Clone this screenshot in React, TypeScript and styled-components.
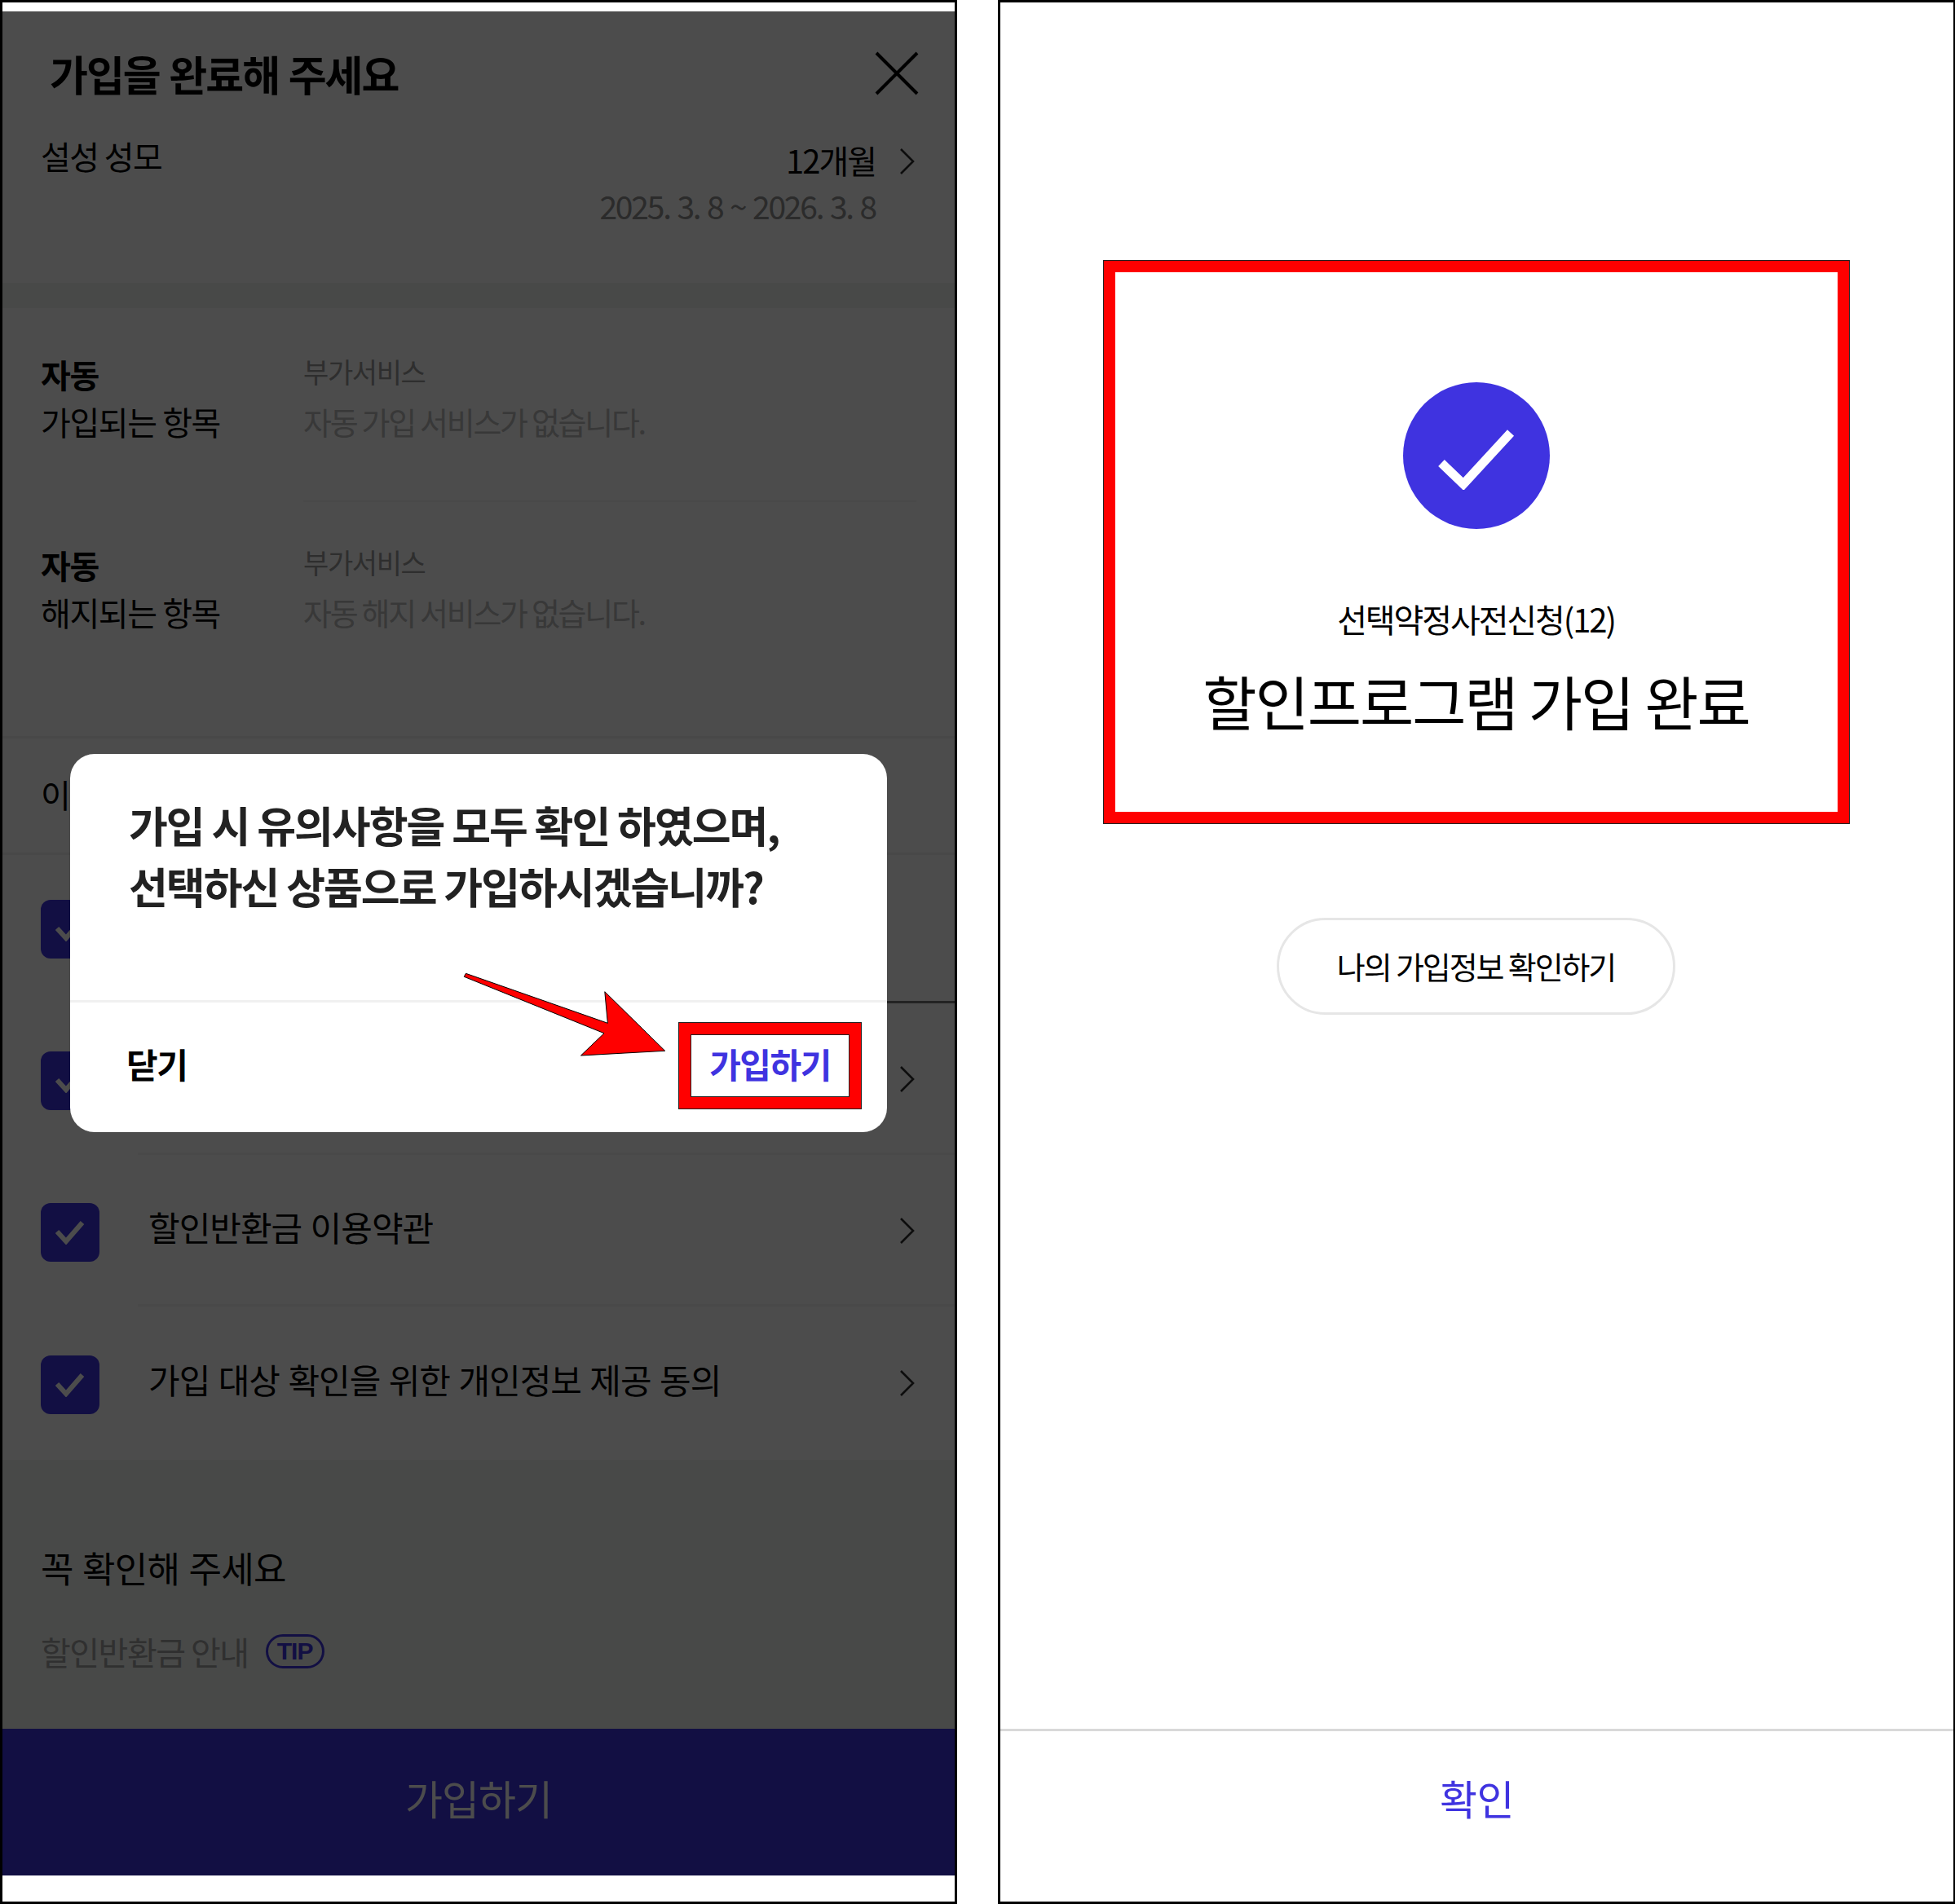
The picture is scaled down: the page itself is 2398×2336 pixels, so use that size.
import React from "react";
import styled, { createGlobalStyle } from "styled-components";

const BLUE = "#3f33e0";
// the first two rows sit behind the dialog, only their box and chevron show
const TERMS = ["", "", "할인반환금 이용약관", "가입 대상 확인을 위한 개인정보 제공 동의"];

const GlobalStyle = createGlobalStyle`
  html, body {
    margin: 0;
    background: #fff;
  }
  * {
    box-sizing: border-box;
  }
`;

function Chevron() {
  return (
    <ChevronIcon viewBox="0 0 22 34" fill="none" stroke="#2e2e2e" strokeWidth="2.6">
      <path d="M3 2l15 15L3 32" />
    </ChevronIcon>
  );
}

export default function App() {
  return (
    <Page>
      <GlobalStyle />
      <Phone>
        <Screen>
          <TitleBar>
            <Title>가입을 완료해 주세요</Title>
            <CloseIcon viewBox="0 0 54 54" fill="none" stroke="#000" strokeWidth="4">
              <path d="M2 2l50 50M52 2L2 52" />
            </CloseIcon>
          </TitleBar>
          <PeriodBlock>
            <PeriodLabel>설성 성모</PeriodLabel>
            <PeriodRight>
              <PeriodValue>
                <span>12개월</span>
                <Chevron />
              </PeriodValue>
              <PeriodDate>2025. 3. 8 ~ 2026. 3. 8</PeriodDate>
            </PeriodRight>
          </PeriodBlock>
          <Band />
          <AutoSection>
            <AutoRow>
              <AutoLabel>
                <strong>자동</strong>
                가입되는 항목
              </AutoLabel>
              <AutoBody>
                <AutoKind>부가서비스</AutoKind>
                <AutoEmpty>자동 가입 서비스가 없습니다.</AutoEmpty>
              </AutoBody>
            </AutoRow>
            <AutoDivider />
            <AutoRow $second>
              <AutoLabel>
                <strong>자동</strong>
                해지되는 항목
              </AutoLabel>
              <AutoBody>
                <AutoKind>부가서비스</AutoKind>
                <AutoEmpty>자동 해지 서비스가 없습니다.</AutoEmpty>
              </AutoBody>
            </AutoRow>
          </AutoSection>
          <TermsHeader>이용</TermsHeader>
          {TERMS.map((term, index) => (
            <TermRow key={index} $first={index === 0} $last={index === TERMS.length - 1}>
              <CheckBox $first={index === 0}>
                <svg width="36" height="30" viewBox="0 0 36 30" fill="none" stroke="#fff" strokeWidth="6">
                  <path d="M2 14l11 12L33 3" />
                </svg>
              </CheckBox>
              <TermText>{term}</TermText>
              {index > 0 && <Chevron />}
            </TermRow>
          ))}
          <Notice>
            <NoticeTitle>꼭 확인해 주세요</NoticeTitle>
            <NoticeLine>
              할인반환금 안내
              <TipBadge>TIP</TipBadge>
            </NoticeLine>
          </Notice>
          <SubmitBar>가입하기</SubmitBar>
          <Dim />
          <Modal>
            <ModalMessage>
              가입 시 유의사항을 모두 확인 하였으며,
              <br />
              선택하신 상품으로 가입하시겠습니까?
            </ModalMessage>
            <ModalActions>
              <CloseAction>닫기</CloseAction>
              <JoinAction>가입하기</JoinAction>
            </ModalActions>
            <ArrowMark viewBox="0 0 250 105" fill="#f00" stroke="#000" strokeWidth="1">
              <path d="M2.4.3L.3 4.3 172 73.7 143.5 101 246.7 95.3 172.8 22.7 176.4 61.3z" />
            </ArrowMark>
          </Modal>
        </Screen>
      </Phone>
      <ResultPhone>
        <ResultMain>
          <ResultHighlight>
            <CheckCircle>
              <svg width="100" height="84" viewBox="0 0 100 84" fill="none" stroke="#fff" strokeWidth="11">
                <path d="M7 51l27 26 58-63" />
              </svg>
            </CheckCircle>
            <ResultPlan>선택약정사전신청(12)</ResultPlan>
            <ResultHeading>할인프로그램 가입 완료</ResultHeading>
          </ResultHighlight>
          <InfoPill>나의 가입정보 확인하기</InfoPill>
        </ResultMain>
        <ConfirmBar>확인</ConfirmBar>
      </ResultPhone>
    </Page>
  );
}

const Page = styled.div`
  display: flex;
  justify-content: space-between;
  width: 2398px;
  height: 2336px;
  font-family: "Noto Sans CJK KR", "Noto Sans", sans-serif;
  color: #000;
  overflow: hidden;
`;

const Phone = styled.div`
  width: 1174px;
  height: 2336px;
  border: 3px solid #000;
  padding: 11px 0 32px;
  background: #fff;
`;

const Screen = styled.div`
  position: relative;
  height: 2287px;
  overflow: hidden;
  background: #fff;
`;

const Dim = styled.div`
  position: absolute;
  inset: 0;
  background: rgba(0, 0, 0, 0.7);
`;

const TitleBar = styled.div`
  display: flex;
  align-items: center;
  justify-content: space-between;
  height: 76px;
  margin-top: 38px;
  padding: 0 44px 0 58px;
`;

const Title = styled.h1`
  margin: 0;
  font-size: 51px;
  line-height: 76px;
  font-weight: 700;
  letter-spacing: -2px;
  word-spacing: 2px;
`;

const CloseIcon = styled.svg`
  width: 54px;
  height: 54px;
`;

const PeriodBlock = styled.div`
  display: flex;
  justify-content: space-between;
  height: 219px;
  padding: 38px 47px 0;
`;

const PeriodLabel = styled.div`
  font-size: 40px;
  line-height: 50px;
  letter-spacing: -1.6px;
`;

const PeriodRight = styled.div`
  display: flex;
  flex-direction: column;
  align-items: flex-end;
`;

const ChevronIcon = styled.svg`
  width: 22px;
  height: 34px;
  flex: none;
`;

const PeriodValue = styled.div`
  display: flex;
  align-items: center;
  gap: 28px;
  margin-top: 5px;
  font-size: 40px;
  line-height: 50px;
  letter-spacing: -2px;

  svg {
    margin-top: 4px;
  }
`;

const PeriodDate = styled.div`
  margin: 6px 50px 0 0;
  font-size: 39px;
  line-height: 50px;
  letter-spacing: -2.2px;
  word-spacing: 2px;
  color: #8f8f8f;
`;

const Band = styled.div`
  height: 31px;
  background: #f0f4f1;
`;

const AutoSection = styled.section`
  height: 525px;
  padding: 52px 47px 0;
`;

const AutoRow = styled.div<{ $second?: boolean }>`
  display: grid;
  grid-template-columns: 322px 1fr;
  padding-top: ${(props) => (props.$second ? 48 : 0)}px;
`;

const AutoLabel = styled.div`
  display: flex;
  flex-direction: column;
  font-size: 40px;
  line-height: 58px;
  letter-spacing: -1.4px;

  strong {
    font-weight: 700;
  }
`;

const AutoBody = styled.div`
  display: flex;
  flex-direction: column;
`;

const AutoKind = styled.div`
  font-size: 34px;
  line-height: 52px;
  letter-spacing: -1.4px;
  color: #999;
`;

const AutoEmpty = styled.div`
  font-size: 38px;
  line-height: 70px;
  letter-spacing: -2.3px;
  color: #bbb;
`;

const AutoDivider = styled.div`
  height: 2px;
  margin: 62px 0 0 322px;
  background: #f3f3f3;
`;

const TermsHeader = styled.div`
  display: flex;
  align-items: center;
  height: 146px;
  padding: 0 0 5px 47px;
  border-top: 3px solid #f0f0f0;
  border-bottom: 3px solid #f0f0f0;
  font-size: 40px;
  letter-spacing: -1.7px;
`;

const TermRow = styled.div<{ $first?: boolean; $last?: boolean }>`
  display: flex;
  align-items: center;
  gap: 60px;
  height: ${(props) => (props.$first ? 182 : props.$last ? 188 : 186)}px;
  padding: 0 47px;
  position: relative;

  &::after {
    content: "";
    display: ${(props) => (props.$last ? "none" : "block")};
    position: absolute;
    bottom: 0;
    right: 0;
    left: 166px;
    height: 3px;
    background: ${(props) => (props.$first ? "#777" : "#f3f3f3")};
  }
`;

const CheckBox = styled.div<{ $first?: boolean }>`
  display: flex;
  align-items: center;
  justify-content: center;
  width: 72px;
  height: 72px;
  flex: none;
  margin-top: ${(props) => (props.$first ? 0 : 4)}px;
  border-radius: 12px;
  background: ${BLUE};
`;

const TermText = styled.div`
  flex: 1;
  margin-top: -11px;
  font-size: 42px;
  letter-spacing: -1px;
  word-spacing: 2px;
`;

const Notice = styled.div`
  height: 330px;
  padding-top: 100px;
  background: #f0f4f1;
  padding-left: 47px;
`;

const NoticeTitle = styled.div`
  font-size: 44px;
  line-height: 64px;
  letter-spacing: -0.7px;
  word-spacing: 2px;
`;

const NoticeLine = styled.div`
  display: flex;
  align-items: center;
  gap: 21px;
  margin-top: 41px;
  font-size: 40px;
  line-height: 60px;
  letter-spacing: -1.5px;
  color: #a0a0a0;
`;

const TipBadge = styled.span`
  display: inline-flex;
  align-items: center;
  justify-content: center;
  width: 72px;
  height: 42px;
  border: 3px solid ${BLUE};
  border-radius: 21px;
  font-family: "Liberation Sans", sans-serif;
  font-size: 30px;
  font-weight: 700;
  letter-spacing: -1px;
  color: ${BLUE};
`;

const SubmitBar = styled.div`
  display: flex;
  align-items: center;
  justify-content: center;
  height: 180px;
  padding-bottom: 12px;
  background: ${BLUE};
  font-size: 50px;
  letter-spacing: -1px;
  color: #fff;
`;

const Modal = styled.div`
  position: absolute;
  top: 911px;
  left: 83px;
  width: 1002px;
  height: 464px;
  border-radius: 30px;
  background: #fff;
`;

const ModalMessage = styled.p`
  height: 302px;
  margin: 0;
  padding: 49px 72px 0;
  font-size: 52px;
  line-height: 75px;
  font-weight: 700;
  letter-spacing: -2px;
  color: #222;
`;

const ModalActions = styled.div`
  display: flex;
  align-items: center;
  justify-content: space-between;
  height: 162px;
  padding: 0 32px 4px 69px;
  border-top: 3px solid #f0f0f0;
`;

const CloseAction = styled.button`
  padding: 0 0 6px;
  border: 0;
  background: none;
  font: 700 42px "Noto Sans CJK KR", sans-serif;
  letter-spacing: -1.5px;
  color: #000;
`;

const JoinAction = styled.button`
  width: 223px;
  height: 105px;
  padding: 0 0 6px;
  background: #fff;
  border: 14px solid #f00;
  outline: 1px solid #222;
  box-shadow: inset 0 0 0 1px #222;
  font: 700 42px "Noto Sans CJK KR", sans-serif;
  letter-spacing: -1.5px;
  color: ${BLUE};
`;

const ArrowMark = styled.svg`
  position: absolute;
  left: 483px;
  top: 269px;
  width: 250px;
  height: 105px;
  overflow: visible;
`;

const ResultPhone = styled.div`
  display: flex;
  flex-direction: column;
  width: 1174px;
  height: 2336px;
  border: 3px solid #000;
  border-right-width: 2px;
`;

const ResultMain = styled.div`
  flex: 1;
  display: flex;
  flex-direction: column;
  align-items: center;
  padding: 317px 2px 0 0;
`;

const ResultHighlight = styled.div`
  display: flex;
  flex-direction: column;
  align-items: center;
  width: 914px;
  height: 690px;
  padding-top: 135px;
  border: 14px solid #f00;
  outline: 1px solid #222;
`;

const CheckCircle = styled.div`
  display: flex;
  align-items: center;
  justify-content: center;
  width: 180px;
  height: 180px;
  border-radius: 50%;
  background: ${BLUE};
`;

const ResultPlan = styled.div`
  margin-top: 80px;
  font-size: 40px;
  line-height: 60px;
  letter-spacing: -2.1px;
`;

const ResultHeading = styled.div`
  margin-top: 20px;
  font-size: 72px;
  line-height: 100px;
  letter-spacing: -2px;
`;

const InfoPill = styled.div`
  display: flex;
  align-items: center;
  justify-content: center;
  width: 489px;
  height: 119px;
  margin-top: 116px;
  padding-bottom: 3px;
  border: 3px solid #e6e6e6;
  border-radius: 60px;
  font-size: 38px;
  letter-spacing: -2.1px;
`;

const ConfirmBar = styled.div`
  display: flex;
  align-items: center;
  justify-content: center;
  height: 212px;
  padding-bottom: 48px;
  border-top: 3px solid #d9d9d9;
  font-size: 50px;
  letter-spacing: -0.5px;
  color: ${BLUE};
`;
